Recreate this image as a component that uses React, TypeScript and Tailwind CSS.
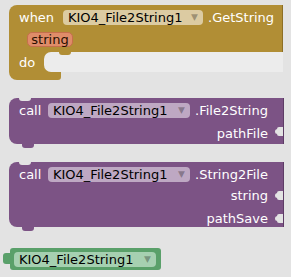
import React from 'react';

const font = { fontFamily: '"DejaVu Sans", Verdana, sans-serif' };

function Field({ label, width, tone }: { label: string; width: string; tone: 'gold' | 'purple' | 'green' }) {
  const bg =
    tone === 'gold' ? 'bg-[#dccba2]' : tone === 'purple' ? 'bg-[#bea8c3]' : 'bg-[#a6d0b1]';
  return (
    <div className={`${width} ${bg} h-[15px] rounded-[4px] flex items-center pl-[5px] pr-[5px]`}>
      <span className="text-[13px] leading-none text-black flex-1 whitespace-nowrap">{label}</span>
      <span className="text-[9px] leading-none text-black/30">▼</span>
    </div>
  );
}

function Socket({ top }: { top: string }) {
  return (
    <div className={`absolute right-0 ${top} w-[6px] h-[9px] bg-[#e3e3e3] rounded-l-[2px]`}>
      <div className="absolute left-[-2px] top-[2px] w-[3px] h-[5px] bg-[#e3e3e3] rounded-l-full" />
    </div>
  );
}

function PrevNotch() {
  return (
    <>
      <div className="absolute left-[10px] top-0 w-[12px] h-[3px] bg-[#e3e3e3] rounded-b-[3px]" />
      <div className="absolute left-[13px] bottom-[-4px] w-[12px] h-[4px] bg-[#7c5385] rounded-b-[3px]" />
    </>
  );
}

export default function App() {
  return (
    <div
      className="w-[291px] h-[277px] bg-[#e3e3e3] overflow-hidden flex flex-col pt-[5px] text-white"
      style={font}
    >
      {/* event block */}
      <div className="ml-[9px] w-[274px] flex flex-col">
        <div className="h-[47px] bg-[#b18e35] rounded-tl-[8px] border-r border-[#8d6f25] flex flex-col">
          <div className="mt-[5px] h-[15px] flex items-center pl-[10px]">
            <span className="text-[13px] leading-none w-[44px]">when</span>
            <Field label="KIO4_File2String1" width="w-[140px]" tone="gold" />
            <span className="text-[13px] leading-none ml-[5px]">.GetString</span>
          </div>
          <div className="mt-[7px] ml-[18px] w-[46px] h-[15px] rounded-[5px] bg-[#df8c69] border border-[#c56f4c] flex items-center justify-center">
            <span className="text-[13px] leading-none text-[#2a0f00]">string</span>
          </div>
        </div>
        <div className="h-[20px] flex bg-[#b18e35] relative">
          <div className="w-[35px] pl-[10px] flex items-center">
            <span className="text-[13px] leading-none">do</span>
          </div>
          <div className="flex-1 bg-[#ececec] rounded-l-[7px]" />
          <div className="absolute left-[50px] top-0 w-[12px] h-[3px] bg-[#b18e35] rounded-b-[3px]" />
        </div>
        <div className="w-[52px] h-[8px] bg-[#b18e35] rounded-bl-[8px] rounded-br-[3px]" />
      </div>

      {/* call File2String */}
      <div className="ml-[9px] mt-[18px] w-[275px] h-[46px] bg-[#7c5385] rounded-l-[8px] border-r border-[#5e3c66] relative flex flex-col">
        <PrevNotch />
        <div className="mt-[5px] h-[15px] flex items-center pl-[10px]">
          <span className="text-[13px] leading-none w-[29px]">call</span>
          <Field label="KIO4_File2String1" width="w-[142px]" tone="purple" />
          <span className="text-[13px] leading-none ml-[5px]">.File2String</span>
        </div>
        <div className="mt-[8px] h-[15px] flex items-center justify-end pr-[15px]">
          <span className="text-[13px] leading-none">pathFile</span>
        </div>
        <Socket top="top-[29px]" />
      </div>

      {/* call String2File */}
      <div className="ml-[9px] mt-[18px] w-[275px] h-[65px] bg-[#7c5385] rounded-l-[8px] border-r border-[#5e3c66] relative flex flex-col">
        <PrevNotch />
        <div className="mt-[5px] h-[15px] flex items-center pl-[10px]">
          <span className="text-[13px] leading-none w-[29px]">call</span>
          <Field label="KIO4_File2String1" width="w-[142px]" tone="purple" />
          <span className="text-[13px] leading-none ml-[5px]">.String2File</span>
        </div>
        <div className="mt-[6px] h-[15px] flex items-center justify-end pr-[15px]">
          <span className="text-[13px] leading-none">string</span>
        </div>
        <div className="mt-[8px] h-[15px] flex items-center justify-end pr-[15px]">
          <span className="text-[13px] leading-none">pathSave</span>
        </div>
        <Socket top="top-[29px]" />
        <Socket top="top-[52px]" />
      </div>

      {/* component getter */}
      <div className="ml-[10px] mt-[21px] w-[151px] h-[22px] bg-[#5aa06a] rounded-[3px] relative flex items-center pl-[4px]">
        <div className="absolute left-[-7px] top-[5px] w-[8px] h-[11px] bg-[#5aa06a] rounded-l-[3px]" />
        <Field label="KIO4_File2String1" width="w-[142px]" tone="green" />
      </div>
    </div>
  );
}
